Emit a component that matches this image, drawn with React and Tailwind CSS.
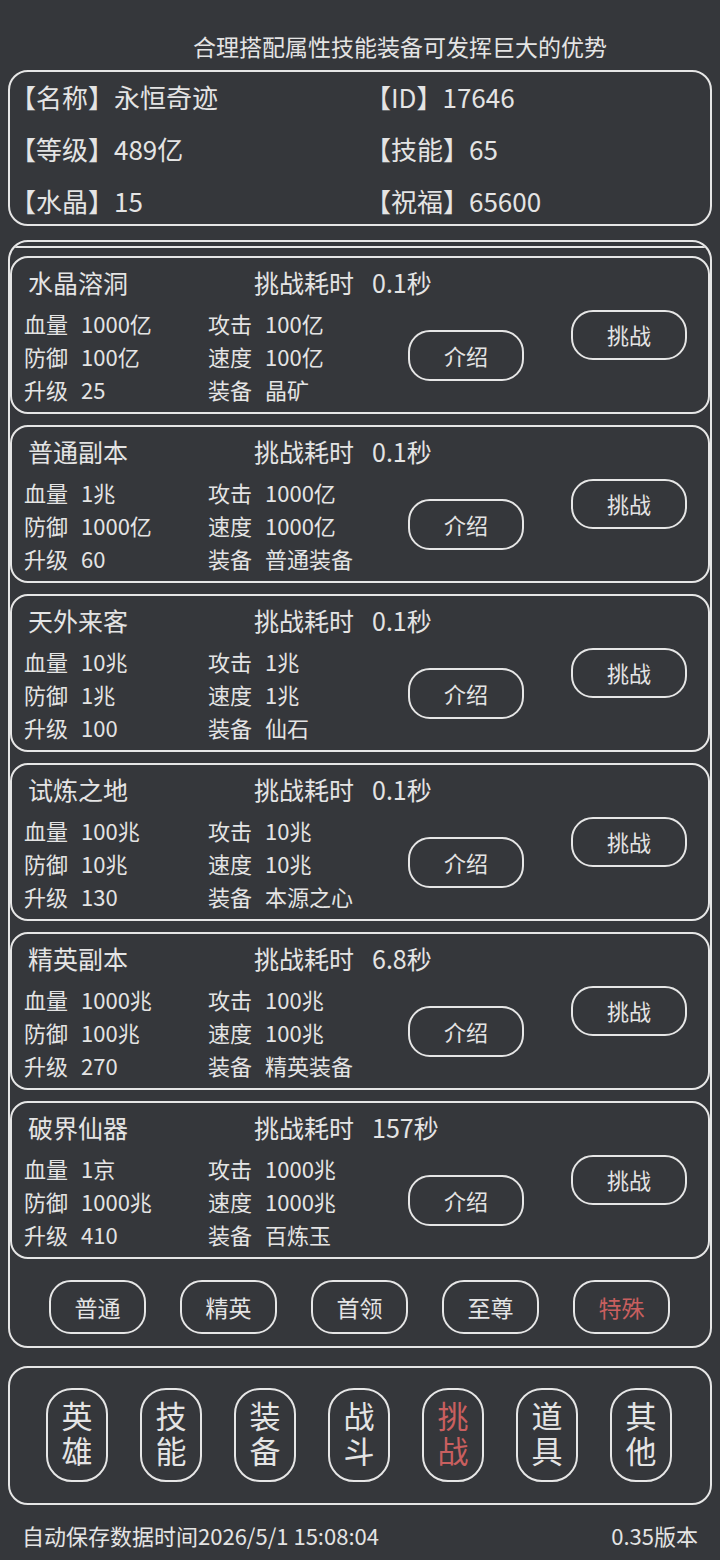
const stages = [
  { name: '水晶溶洞', time: '0.1秒', hp: '1000亿', atk: '100亿', def: '100亿', spd: '100亿', lv: '25', gear: '晶矿' },
  { name: '普通副本', time: '0.1秒', hp: '1兆', atk: '1000亿', def: '1000亿', spd: '1000亿', lv: '60', gear: '普通装备' },
  { name: '天外来客', time: '0.1秒', hp: '10兆', atk: '1兆', def: '1兆', spd: '1兆', lv: '100', gear: '仙石' },
  { name: '试炼之地', time: '0.1秒', hp: '100兆', atk: '10兆', def: '10兆', spd: '10兆', lv: '130', gear: '本源之心' },
  { name: '精英副本', time: '6.8秒', hp: '1000兆', atk: '100兆', def: '100兆', spd: '100兆', lv: '270', gear: '精英装备' },
  { name: '破界仙器', time: '157秒', hp: '1京', atk: '1000兆', def: '1000兆', spd: '1000兆', lv: '410', gear: '百炼玉' },
];

const tabs = ['普通', '精英', '首领', '至尊', '特殊'];
const nav = ['英雄', '技能', '装备', '战斗', '挑战', '道具', '其他'];

const Stat = ({ label, value }) => (
  <div className="flex h-[33px] items-center">
    <span className="w-[57px]">{label}</span>
    <span>{value}</span>
  </div>
);

const StageCard = ({ s }) => (
  <div className="h-[158px] border-2 border-[#e6e6e6] rounded-[18px]">
    <div className="flex h-[40px] mt-[5px] items-center text-[25px]">
      <span className="pl-[16px] w-[242px]">{s.name}</span>
      <span>挑战耗时</span>
      <span className="ml-[18px]">{s.time}</span>
    </div>
    <div className="flex items-start mt-[4px]">
      <div className="pl-[12px] w-[396px] grid grid-cols-[184px_1fr] text-[22px]">
        <Stat label="血量" value={s.hp} />
        <Stat label="攻击" value={s.atk} />
        <Stat label="防御" value={s.def} />
        <Stat label="速度" value={s.spd} />
        <Stat label="升级" value={s.lv} />
        <Stat label="装备" value={s.gear} />
      </div>
      <button className="w-[116px] h-[51px] mt-[23px] border-2 border-[#e6e6e6] rounded-[22px] text-[22px]">介绍</button>
      <button className="w-[116px] h-[50px] mt-[3px] ml-[47px] pb-[2px] border-2 border-[#e6e6e6] rounded-[22px] text-[22px]">挑战</button>
    </div>
  </div>
);

export default function App() {
  return (
    <div
      className="w-[720px] h-[1560px] bg-[#35373b] text-[#e4e4e4] overflow-hidden"
      style={{ fontFamily: '"Noto Sans CJK SC", "Noto Sans", sans-serif' }}
    >
      <div className="h-[70px] pt-[22px] pl-[80px] flex items-center justify-center text-[23px]">
        合理搭配属性技能装备可发挥巨大的优势
      </div>

      <div className="mx-[8px] h-[156px] border-2 border-[#e6e6e6] rounded-[20px] text-[26px]">
        {[
          ['【名称】永恒奇迹', '【ID】17646'],
          ['【等级】489亿', '【技能】65'],
          ['【水晶】15', '【祝福】65600'],
        ].map((row, i) => (
          <div key={i} className="flex h-[52px] pb-[4px] items-center">
            <span className="w-[355px]">{row[0]}</span>
            <span>{row[1]}</span>
          </div>
        ))}
      </div>

      <div className="mx-[8px] mt-[14px] h-[1108px] border-2 border-[#e6e6e6] rounded-[20px] overflow-hidden">
        <div className="h-[6px] border-2 border-t-0 border-[#e6e6e6] rounded-b-[18px]" />
        <div className="flex flex-col gap-[11px] mt-[8px]">
          {stages.map((s) => (
            <StageCard key={s.name} s={s} />
          ))}
        </div>
        <div className="flex gap-[34px] pl-[39px] mt-[21px]">
          {tabs.map((t) => (
            <button
              key={t}
              className={`w-[97px] h-[54px] border-2 border-[#e6e6e6] rounded-[22px] text-[23px] ${t === '特殊' ? 'text-[#c95f5f]' : ''}`}
            >
              {t}
            </button>
          ))}
        </div>
      </div>

      <div className="mx-[8px] mt-[18px] h-[139px] border-2 border-[#e6e6e6] rounded-[20px] pt-[20px] pl-[36px] flex gap-[32px]">
        {nav.map((n) => (
          <button
            key={n}
            className={`w-[62px] h-[94px] pb-[6px] border-2 border-[#e6e6e6] rounded-[26px] flex items-center justify-center text-[31px] leading-[35px] ${n === '挑战' ? 'text-[#c95f5f]' : ''}`}
          >
            <span className="block w-[32px] break-all text-center">{n}</span>
          </button>
        ))}
      </div>

      <div className="h-[60px] px-[22px] flex items-center justify-between text-[22px]">
        <span>自动保存数据时间2026/5/1 15:08:04</span>
        <span>0.35版本</span>
      </div>
    </div>
  );
}
